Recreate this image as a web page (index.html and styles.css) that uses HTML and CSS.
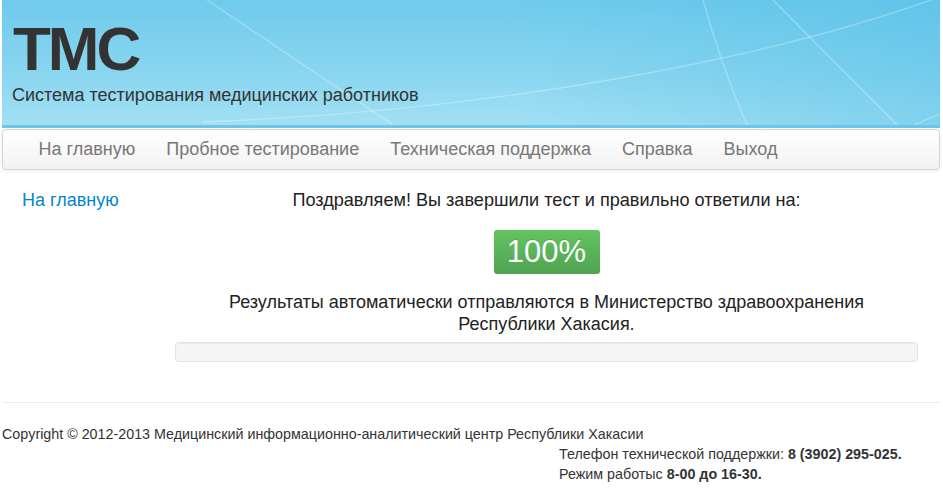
FILE: index.html
```html
<!DOCTYPE html>
<html lang="ru">
<head>
<meta charset="utf-8">
<title>ТМС</title>
<link rel="stylesheet" href="styles.css">
</head>
<body>
<div class="page">
  <header class="header">
    <svg class="header-lines" viewBox="0 0 938 125" preserveAspectRatio="none" aria-hidden="true">
      <path d="M205 0 L391 125" />
      <path d="M701 0 Q718 62 745 125" />
      <path d="M771 0 L895 125" />
      <path d="M200 122 C 480 112, 760 62, 940 -4" />
      <path d="M912 125 L940 113" />
    </svg>
    <h1 class="brand">ТМС</h1>
    <div class="tagline">Система тестирования медицинских работников</div>
  </header>

  <nav class="navbar">
    <ul class="nav">
      <li><a href="#">На главную</a></li>
      <li><a href="#">Пробное тестирование</a></li>
      <li><a href="#">Техническая поддержка</a></li>
      <li><a href="#">Справка</a></li>
      <li><a href="#">Выход</a></li>
    </ul>
  </nav>

  <div class="row">
    <aside class="sidebar">
      <a href="#" class="side-link">На главную</a>
    </aside>
    <main class="content">
      <p class="lead">Поздравляем! Вы завершили тест и правильно ответили на:</p>
      <div class="badge-wrap"><span class="score">100%</span></div>
      <p class="note">Результаты автоматически отправляются в Министерство здравоохранения<br>Республики Хакасия.</p>
      <div class="well"></div>
    </main>
  </div>

  <hr class="divider">

  <footer class="footer">
    <div class="copy">Copyright © 2012-2013 Медицинский информационно-аналитический центр Республики Хакасии</div>
    <div class="support">
      <div>Телефон технической поддержки: <b>8 (3902) 295-025.</b></div>
      <div>Режим работыс <b>8-00 до 16-30.</b></div>
    </div>
  </footer>
</div>
</body>
</html>
```

FILE: styles.css
```css
* { box-sizing: border-box; }

html, body {
  margin: 0;
  padding: 0;
  background: #fff;
}

body {
  font-family: "Liberation Sans", Arial, sans-serif;
  color: #333;
}

.page {
  margin: 0 3px 0 2px;
}

.header {
  position: relative;
  height: 128px;
  border-bottom: 3px solid #6cc6ea;
  background:
    linear-gradient(90deg, rgba(255,255,255,0) 55%, rgba(70,185,228,0.35) 100%),
    linear-gradient(180deg, #6fcaec 0%, #8ad6f0 60%, #a2e0f4 100%);
  overflow: hidden;
  padding: 14px 0 0 10px;
}

.header-lines {
  position: absolute;
  left: 0;
  top: 0;
  width: 100%;
  height: 125px;
  fill: none;
  stroke: rgba(255,255,255,0.3);
  stroke-width: 1.3;
}

.brand {
  position: relative;
  margin: 0 0 0 1px;
  font-size: 62px;
  line-height: 70px;
  font-weight: bold;
  color: #333;
  letter-spacing: -3px;
}

.tagline {
  position: relative;
  font-size: 18px;
  line-height: 22px;
  color: #333;
  margin-top: 0;
}

.navbar {
  margin-top: 1px;
  height: 41px;
  border: 1px solid #d4d4d4;
  border-radius: 4px;
  background: linear-gradient(180deg, #ffffff 0%, #f2f2f2 100%);
  box-shadow: 0 1px 4px rgba(0,0,0,0.07);
  padding: 0 20px;
}

.nav {
  list-style: none;
  margin: 0;
  padding: 0;
  display: flex;
  height: 100%;
  align-items: center;
}

.nav a {
  display: block;
  padding: 0 15.5px;
  font-size: 18px;
  line-height: 39px;
  color: #777;
  text-decoration: none;
}

.row {
  display: grid;
  grid-template-columns: 173px 743px;
}

.sidebar {
  padding: 20px 0 0 20px;
}

.side-link {
  font-size: 18px;
  line-height: 20px;
  color: #0088cc;
  text-decoration: none;
}

.content {
  text-align: center;
  padding-top: 20px;
}

.lead {
  margin: 0;
  font-size: 18.1px;
  line-height: 20px;
  color: #222;
}

.badge-wrap {
  margin-top: 20px;
}

.score {
  display: inline-block;
  width: 106px;
  height: 44px;
  line-height: 44px;
  font-size: 31px;
  color: #fff;
  border-radius: 3px;
  background: linear-gradient(180deg, #62c462 0%, #51a351 100%);
  text-shadow: 0 -1px 0 rgba(0,0,0,0.15);
}

.note {
  margin: 17px 0 0;
  font-size: 18px;
  line-height: 22px;
  color: #222;
}

.well {
  margin-top: 7px;
  height: 20px;
  background: #f5f5f5;
  border: 1px solid #e3e3e3;
  border-radius: 4px;
  box-shadow: inset 0 1px 1px rgba(0,0,0,0.05);
}

.divider {
  margin: 40px 0 0;
  border: 0;
  border-top: 1px solid #eee;
}

.footer {
  font-size: 14.3px;
  line-height: 20px;
  color: #333;
  padding-top: 21px;
}

.support {
  padding-left: 557px;
}
```
